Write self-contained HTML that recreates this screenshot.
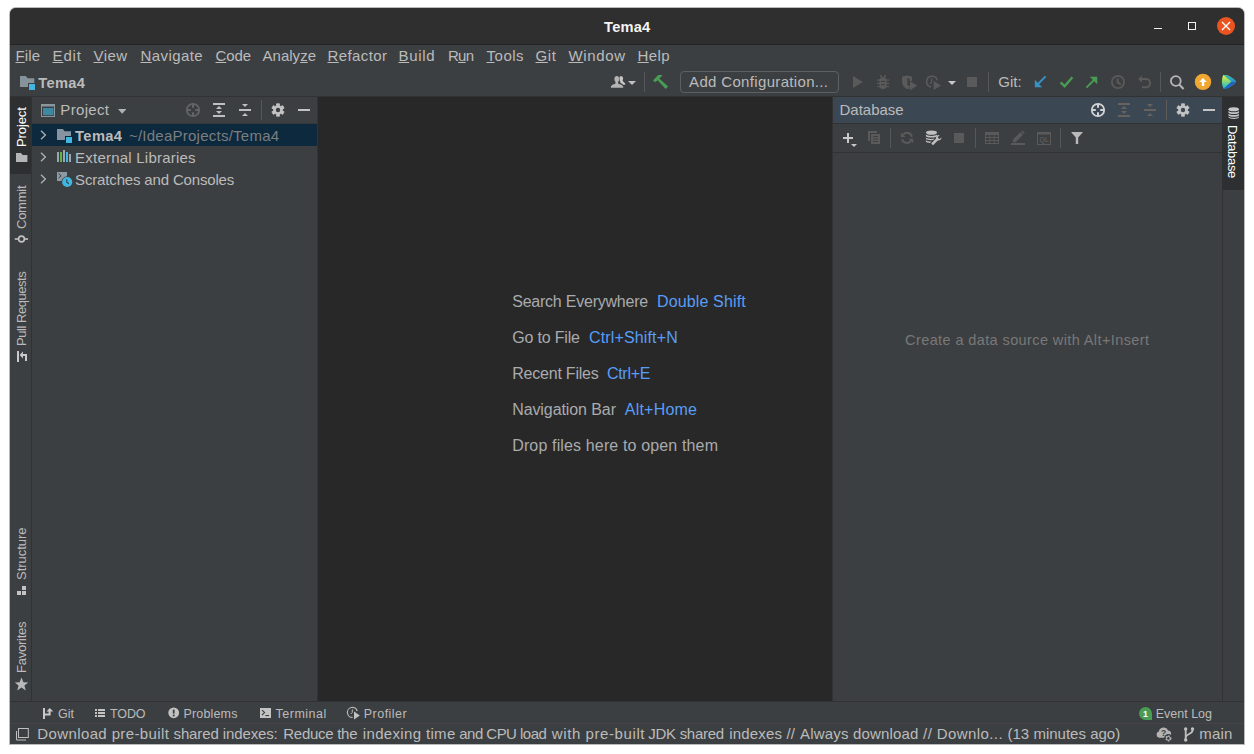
<!DOCTYPE html><html><head><meta charset="utf-8"><title>Tema4</title><style>

html,body{margin:0;padding:0;background:#ffffff;}
#app{position:relative;width:1254px;height:754px;overflow:hidden;background:#ffffff;font-family:"Liberation Sans", sans-serif;}
#app div,#app svg,#app span.t{position:absolute;display:block;}
#app span.t{white-space:nowrap;line-height:1;}
#app u{text-decoration:underline;text-underline-offset:0.5px;text-decoration-thickness:1px;}

</style></head><body><div id="app">
<div style="left:9px;top:7px;width:1236px;height:738px;background:#b9b9b9;border-radius:7px 7px 0 0;"></div>
<div style="left:10px;top:8px;width:1234px;height:736px;background:#3c3f41;border-radius:6px 6px 0 0;"></div>
<div style="left:10px;top:8px;width:1234px;height:36px;background:#302f30;border-radius:6px 6px 0 0;"></div>
<div style="left:10px;top:44px;width:1234px;height:1px;background:#232323;"></div>
<div style="left:10px;top:96px;width:1234px;height:1px;background:#323232;"></div>
<div style="left:10px;top:97px;width:21px;height:604px;background:#3c3f41;"></div>
<div style="left:10px;top:97px;width:21px;height:77px;background:#2d2f30;"></div>
<div style="left:31px;top:97px;width:1px;height:604px;background:#323232;"></div>
<div style="left:32px;top:97px;width:285px;height:604px;background:#3c3f41;"></div>
<div style="left:32px;top:124px;width:285px;height:22px;background:#0d293e;"></div>
<div style="left:317px;top:97px;width:1px;height:604px;background:#323232;"></div>
<div style="left:32px;top:123px;width:285px;height:1px;background:#343638;"></div>
<div style="left:318px;top:97px;width:514px;height:604px;background:#282828;"></div>
<div style="left:832px;top:97px;width:1px;height:604px;background:#323232;"></div>
<div style="left:833px;top:97px;width:389px;height:26px;background:#3c4754;"></div>
<div style="left:833px;top:123px;width:389px;height:1px;background:#323232;"></div>
<div style="left:833px;top:152px;width:389px;height:1px;background:#323232;"></div>
<div style="left:1222px;top:97px;width:1px;height:604px;background:#323232;"></div>
<div style="left:1222px;top:97px;width:22px;height:93px;background:#2d2f30;"></div>
<div style="left:10px;top:701px;width:1234px;height:1px;background:#323232;"></div>
<div style="left:10px;top:723px;width:1234px;height:1px;background:#484443;"></div>
<div style="left:1154px;top:28px;width:8px;height:1px;background:#ffffff;opacity:.92;"></div>
<div style="left:1188px;top:22px;width:8px;height:8px;background:transparent;box-sizing:border-box;border:1px solid #f2f2f2;"></div>
<div style="left:680px;top:71px;width:159px;height:22px;background:transparent;box-sizing:border-box;border:1px solid #5e6060;border-radius:4px;"></div>
<div style="left:644px;top:72px;width:1px;height:20px;background:#555759;"></div>
<div style="left:988px;top:72px;width:1px;height:20px;background:#555759;"></div>
<div style="left:1160px;top:72px;width:1px;height:20px;background:#555759;"></div>
<div style="left:261px;top:100px;width:1px;height:20px;background:#555759;"></div>
<div style="left:1166px;top:100px;width:1px;height:20px;background:#5f5c5a;"></div>
<div style="left:890px;top:128px;width:1px;height:20px;background:#555759;"></div>
<div style="left:975px;top:128px;width:1px;height:20px;background:#555759;"></div>
<div style="left:1060px;top:128px;width:1px;height:20px;background:#555759;"></div>
<div style="left:967px;top:77px;width:10px;height:10px;background:#5a5a5a;"></div>
<div style="left:298px;top:109px;width:12px;height:2px;background:#c3c3c3;"></div>
<div style="left:1203px;top:109px;width:12px;height:2px;background:#c3c3c3;"></div>
<div style="left:843px;top:137px;width:10px;height:2px;background:#c8c8c8;"></div>
<div style="left:847px;top:133px;width:2px;height:10px;background:#c8c8c8;"></div>
<div style="left:954px;top:133px;width:10px;height:10px;background:#5a5a5a;"></div>
<svg style="left:1217px;top:17px" width="18" height="18" viewBox="0 0 18 18"><circle cx="9" cy="9" r="9" fill="#e95420"/><path d="M5 5l8 8M13 5l-8 8" stroke="#fff" stroke-width="1.3" fill="none"/></svg>
<svg style="left:20px;top:76px" width="15" height="14" viewBox="0 0 15 14"><path d="M0 0h5.800l1.800 2.200H14.300V11H0z" fill="#87939a"/><rect x="8" y="7" width="7" height="7" fill="#3c3f41"/><rect x="9" y="8" width="6" height="6" fill="#40b6e0"/></svg>
<svg style="left:610px;top:75px" width="16" height="14" viewBox="0 0 16 14"><g fill="#c6c6c6"><ellipse cx="11.100" cy="3.600" rx="2" ry="2.700"/><path d="M10.200 5.600 11.900 5.300 15.200 8.500V9.700H13.300L10.200 7.400z"/></g><g fill="#b4b4b4" stroke="#3c3f41" stroke-width=".7" paint-order="stroke"><path d="M.9 12.800V11.600C1.200 10 3.400 9.300 5.500 8.400V6.800C4.700 6.200 4.400 5 4.400 3.900 4.400 2.200 5.400 .9 6.800 .9S9.200 2.200 9.200 3.900C9.200 5 8.900 6.200 8.100 6.800V8.400C10.200 9.300 12.900 10 13.200 11.600V12.800z"/></g></svg>
<svg style="left:628px;top:81px" width="8" height="4" viewBox="0 0 8 4"><path d="M0 0h8L4 4z" fill="#c0c0c0"/></svg>
<svg style="left:652px;top:74px" width="17" height="16" viewBox="0 0 17 16"><path d="M.9 6.500 6.200 .9 10 1.100V1.900L7.300 4.400 16.100 12.600 13.700 14.900 5.600 6.200 3.300 8.300z" fill="#499c54"/></svg>
<svg style="left:853px;top:76px" width="10" height="12" viewBox="0 0 10 12"><path d="M0 0 9.800 6 0 12z" fill="#5a5a5a"/></svg>
<svg style="left:876px;top:74px" width="14" height="16" viewBox="0 0 14 16"><path d="M4.200 1.200 6.300 3.700M9.700 1.200 7.800 3.700" fill="none" stroke="#5a5a5a" stroke-width="1.500"/><g fill="#5a5a5a"><rect x="1" y="5.400" width="12.200" height="1.300"/><rect x="1" y="8.800" width="12.200" height="1.200"/><rect x="1" y="12.100" width="12.200" height="1.100"/><path d="M3.500 6.400a3.550 2.900 0 0 1 7.100 0v5.400a3.550 3.200 0 0 1-7.100 0z"/></g><path d="M5 7.400h4M5 10.650h4" stroke="#3c3f41" stroke-width="1"/></svg>
<svg style="left:901px;top:75px" width="17" height="16" viewBox="0 0 17 16"><path d="M1 1.600C3.500 1.500 5 1 6 .600 7 1 8.500 1.500 11 1.600V6L8.600 6V3.400L6.400 3V10.600L8.600 10.400V13.400C7.800 13.800 6.800 14 6 14 2.500 12.500 1 9.500 1 6z" fill="#5a5a5a"/><path d="M9 6.200 16.200 10.600 9 15.200z" fill="#5a5a5a"/></svg>
<svg style="left:925px;top:74px" width="17" height="17" viewBox="0 0 17 17"><path d="M6.110 12.920A5.400 5.400 0 1 1 12.270 6.200" fill="none" stroke="#5a5a5a" stroke-width="1.600"/><path d="M6.800 4.400 6.500 8.400 4.900 9.700" fill="none" stroke="#5a5a5a" stroke-width="1.300"/><path d="M8.700 7.100 16 11.500 8.700 16z" fill="#5a5a5a"/></svg>
<svg style="left:948px;top:81px" width="8" height="4" viewBox="0 0 8 4"><path d="M0 0h8L4 4z" fill="#c8c8c8"/></svg>
<svg style="left:1034px;top:75px" width="13" height="13" viewBox="0 0 13 13"><path d="M11.600 1.400 3.600 9.400" stroke="#3592c4" stroke-width="2" fill="none"/><path d="M.8 4.800V12.200H8.200z" fill="#3592c4"/></svg>
<svg style="left:1059px;top:75px" width="15" height="13" viewBox="0 0 15 13"><path d="M1.600 7.400 5.600 11.200 13.400 2.200" stroke="#499c54" stroke-width="2.400" fill="none"/></svg>
<svg style="left:1085px;top:76px" width="13" height="13" viewBox="0 0 13 13"><path d="M1.400 11.600 9.400 3.600" stroke="#499c54" stroke-width="2" fill="none"/><path d="M4.800 .8H12.200V8.200z" fill="#499c54"/></svg>
<svg style="left:1110px;top:74px" width="16" height="16" viewBox="0 0 16 16"><circle cx="8" cy="8" r="6.100" fill="none" stroke="#5a5a5a" stroke-width="1.800"/><path d="M7.600 4.400V8.400L10.800 10.400" fill="none" stroke="#5a5a5a" stroke-width="2"/></svg>
<svg style="left:1137px;top:74px" width="15" height="15" viewBox="0 0 15 15"><path d="M1.200 5 5 1.200V8.800z" fill="#5a5a5a"/><path d="M4.600 5H9.400A3.700 4.100 0 0 1 9.400 13.200H5" fill="none" stroke="#5a5a5a" stroke-width="2"/></svg>
<svg style="left:1169px;top:74px" width="16" height="16" viewBox="0 0 16 16"><circle cx="6.800" cy="7" r="4.900" fill="none" stroke="#b6b6b6" stroke-width="1.800"/><path d="M10.400 10.800 14.600 15" stroke="#b6b6b6" stroke-width="2" fill="none"/></svg>
<svg style="left:1194px;top:73px" width="18" height="18" viewBox="0 0 18 18"><circle cx="9" cy="8.900" r="8.200" fill="#f0a732"/><path d="M9 5 12.800 9H10.200V13H7.800V9H5.200z" fill="#fff"/></svg>
<svg style="left:1221px;top:74px" width="16" height="16" viewBox="0 0 16 16"><defs><linearGradient id="sg1" x1="0" y1="0" x2="0" y2="1"><stop offset="0" stop-color="#f6f03c"/><stop offset=".5" stop-color="#7fd67a"/><stop offset="1" stop-color="#14b5e8"/></linearGradient><linearGradient id="sg2" x1="0" y1="0" x2="1" y2="1"><stop offset="0" stop-color="#35c7a0"/><stop offset="1" stop-color="#1a8fe0"/></linearGradient></defs><path d="M2.200 1C6.500 .6 12 3.600 15 7.600 12.600 11.600 7 14.800 2.600 14.800 .4 10.500 .4 5 2.200 1z" fill="url(#sg1)"/><path d="M2.200 1C6.500 .6 12 3.600 15 7.600L10.400 7.500z" fill="url(#sg2)"/><path d="M15 7.600C12.600 11.600 7 14.800 2.600 14.800L10.400 7.500z" fill="#1f62c8"/></svg>
<svg style="left:41px;top:104px" width="14" height="13" viewBox="0 0 14 13"><rect x=".5" y=".5" width="13" height="12" fill="none" stroke="#8b979f"/><rect x="0" y="0" width="14" height="2.500" fill="#8b979f"/><rect x="2" y="4" width="10.500" height="7.200" fill="#3d88a3"/></svg>
<svg style="left:118px;top:109px" width="8" height="5" viewBox="0 0 8 5"><path d="M0 0h8.400L4.200 4.800z" fill="#afb1b3"/></svg>
<svg style="left:185px;top:102px" width="16" height="16" viewBox="0 0 16 16"><g fill="none" stroke="#626466"><circle cx="8" cy="8" r="6.200" stroke-width="1.800"/><path d="M8 1.600V5.800M8 10.200V14.400M1.600 8H5.800M10.200 8H14.400" stroke-width="2"/></g></svg>
<svg style="left:213px;top:103px" width="12" height="14" viewBox="0 0 12 14"><g fill="#bfbfbf"><rect x="0" y="0" width="12" height="2"/><rect x="0" y="12" width="12" height="2"/><path d="M3 6H9L6 3z"/><path d="M3 8H9L6 11z"/></g></svg>
<svg style="left:239px;top:103px" width="12" height="14" viewBox="0 0 12 14"><g fill="#bfbfbf"><rect x="0" y="6" width="12" height="2"/><path d="M3 1H9L6 4z"/><path d="M3 13H9L6 10z"/></g></svg>
<svg style="left:271px;top:103px" width="14" height="14" viewBox="0 0 14 14"><path d="M5.54 2.74 L5.54 0.77 L8.46 0.77 L8.46 2.74 L9.96 3.61 L11.67 2.62 L13.13 5.15 L11.42 6.13 L11.42 7.87 L13.13 8.85 L11.67 11.38 L9.96 10.39 L8.46 11.26 L8.46 13.23 L5.54 13.23 L5.54 11.26 L4.04 10.39 L2.33 11.38 L0.87 8.85 L2.58 7.87 L2.58 6.13 L0.87 5.15 L2.33 2.62 L4.04 3.61z" fill="#c3c3c3" stroke="#c3c3c3" stroke-width=".8" stroke-linejoin="round"/><circle cx="7" cy="7" r="2.200" fill="#3c3f41"/></svg>
<svg style="left:40px;top:129.5px" width="7" height="10" viewBox="0 0 7 10"><path d="M1 .8 5.400 5 1 9.200" fill="none" stroke="#afb1b3" stroke-width="1.300"/></svg>
<svg style="left:40px;top:151.5px" width="7" height="10" viewBox="0 0 7 10"><path d="M1 .8 5.400 5 1 9.200" fill="none" stroke="#afb1b3" stroke-width="1.300"/></svg>
<svg style="left:40px;top:173.5px" width="7" height="10" viewBox="0 0 7 10"><path d="M1 .8 5.400 5 1 9.200" fill="none" stroke="#afb1b3" stroke-width="1.300"/></svg>
<svg style="left:57px;top:129px" width="16" height="15" viewBox="0 0 16 15"><path d="M0 0h5.800l1.800 2.200H14V11H0z" fill="#8594a0"/><rect x="8" y="7" width="8" height="8" fill="#0d293e"/><rect x="9" y="8" width="6" height="6" fill="#40b6e0"/></svg>
<svg style="left:57px;top:150px" width="15" height="12" viewBox="0 0 15 12"><rect x="0" y="2" width="2" height="10" fill="#9aa7b0"/><rect x="3" y="2" width="2" height="10" fill="#62b543"/><rect x="6" y="0" width="2" height="12" fill="#9aa7b0"/><rect x="9" y="2" width="2" height="10" fill="#40b6e0"/><rect x="12" y="4" width="2" height="8" fill="#9aa7b0"/></svg>
<svg style="left:57px;top:172px" width="16" height="16" viewBox="0 0 16 16"><rect x="0" y="0" width="10" height="9" fill="#8e9aa3"/><path d="M1.600 1.600 4.200 3.800 1.600 6" fill="none" stroke="#3c3f41" stroke-width="1"/><circle cx="10.200" cy="10" r="5.800" fill="#3c3f41"/><circle cx="10.200" cy="10" r="5.100" fill="#40b6e0"/><path d="M9.800 7.200V10.200L11.800 11.800" fill="none" stroke="#2d4a5a" stroke-width="1.200"/></svg>
<svg style="left:16px;top:153px" width="12" height="9" viewBox="0 0 12 9"><path d="M0 0h5l1.600 2H11.400V9H0z" fill="#b5b5b5"/></svg>
<svg style="left:14px;top:234px" width="15" height="10" viewBox="0 0 15 10"><path d="M.8 5H14" stroke="#c3c3c3" stroke-width="1.600"/><circle cx="7.500" cy="5" r="2.900" fill="#3c3f41" stroke="#c3c3c3" stroke-width="1.600"/></svg>
<svg style="left:16px;top:350px" width="12" height="13" viewBox="0 0 12 13"><g fill="#c8c8c8"><rect x="1" y="1" width="2" height="11"/><path d="M3.600 5 7 1.600V4H11V11H9V6H7V8.400z"/></g></svg>
<svg style="left:16px;top:585px" width="11" height="11" viewBox="0 0 11 11"><g fill="#c3c3c3"><rect x="6" y="1" width="4" height="4"/><rect x="1" y="6" width="4" height="4"/><rect x="6" y="6" width="4" height="4"/></g></svg>
<svg style="left:14px;top:677px" width="15" height="14" viewBox="0 0 15 14"><path d="M7.500 .4 9.400 5.200 14.200 5.400 10.400 8.600 11.800 13.400 7.500 10.600 3.200 13.400 4.600 8.600 .8 5.400 5.600 5.200z" fill="#b9b9b9"/></svg>
<svg style="left:1090px;top:102px" width="16" height="16" viewBox="0 0 16 16"><g fill="none" stroke="#d0d2d4"><circle cx="8" cy="8" r="6.200" stroke-width="1.800"/><path d="M8 1.600V5.800M8 10.200V14.400M1.600 8H5.800M10.200 8H14.400" stroke-width="2"/></g></svg>
<svg style="left:1118px;top:103px" width="12" height="14" viewBox="0 0 12 14"><g fill="#66625f"><rect x="0" y="0" width="12" height="2"/><rect x="0" y="12" width="12" height="2"/><path d="M3 6H9L6 3z"/><path d="M3 8H9L6 11z"/></g></svg>
<svg style="left:1144px;top:103px" width="12" height="14" viewBox="0 0 12 14"><g fill="#66625f"><rect x="0" y="6" width="12" height="2"/><path d="M3 1H9L6 4z"/><path d="M3 13H9L6 10z"/></g></svg>
<svg style="left:1176px;top:103px" width="14" height="14" viewBox="0 0 14 14"><path d="M5.54 2.74 L5.54 0.77 L8.46 0.77 L8.46 2.74 L9.96 3.61 L11.67 2.62 L13.13 5.15 L11.42 6.13 L11.42 7.87 L13.13 8.85 L11.67 11.38 L9.96 10.39 L8.46 11.26 L8.46 13.23 L5.54 13.23 L5.54 11.26 L4.04 10.39 L2.33 11.38 L0.87 8.85 L2.58 7.87 L2.58 6.13 L0.87 5.15 L2.33 2.62 L4.04 3.61z" fill="#c3c3c3" stroke="#c3c3c3" stroke-width=".8" stroke-linejoin="round"/><circle cx="7" cy="7" r="2.200" fill="#3c4754"/></svg>
<svg style="left:1228px;top:107px" width="11.4" height="12.2" viewBox="0 0 12 13"><g fill="#c8c8c8"><ellipse cx="6" cy="2.400" rx="5.600" ry="2.200"/><path d="M.4 4.200c1 1.800 10.200 1.800 11.200 0V6c-1 1.900-10.200 1.900-11.200 0z"/><path d="M.4 7.200c1 1.800 10.200 1.800 11.200 0V9c-1 1.900-10.200 1.900-11.200 0z"/><path d="M.4 10.200c1 1.800 10.200 1.800 11.200 0V11c-1 2.400-10.200 2.400-11.200 0z"/></g></svg>
<svg style="left:851px;top:144px" width="6" height="3" viewBox="0 0 6 3"><path d="M0 0h6L3 3z" fill="#c8c8c8"/></svg>
<svg style="left:868px;top:131px" width="12" height="13" viewBox="0 0 12 13"><path d="M0 0h9v2H2v8H0z" fill="#5a5a5a"/><rect x="3" y="3" width="9" height="10" fill="#5a5a5a"/><path d="M5 5.500h5M5 8h5M5 10.500h5" stroke="#3c3f41" stroke-width="1"/></svg>
<svg style="left:900px;top:131px" width="14" height="14" viewBox="0 0 14 14"><g fill="none" stroke="#5a5a5a" stroke-width="2"><path d="M3.100 3.700A5 5 0 0 1 11.900 5.800"/><path d="M10.950 9.950A5 5 0 0 1 2.100 8.200"/></g><path d="M.8 1.500V6H5.500z" fill="#5a5a5a"/><path d="M13.200 12.200V7.700H8.700z" fill="#5a5a5a"/></svg>
<svg style="left:925px;top:130px" width="17" height="16" viewBox="0 0 17 16"><g fill="#c0c0c0"><ellipse cx="6.500" cy="2.600" rx="5.600" ry="2.200"/><path d="M.9 4.600c1 1.700 10.200 1.700 11.200 0V6.200c-1 1.700-10.200 1.700-11.200 0z"/><path d="M.9 7.600c1 1.600 6.500 1.700 8.600.9L8 10c-2.400.4-6.300 0-7.100-1z"/><path d="M.9 10.200c.8 1.200 3.800 1.500 5.600 1.300L5 13c-1.800 0-3.600-.4-4.100-1.400z"/><path d="M6.200 13.400 11 8.600A3 3 0 0 1 14.600 5.200L12.800 7 13.400 8.400 14.800 9 16.400 7.200A3 3 0 0 1 12.800 10.400L8 15.200z"/></g></svg>
<svg style="left:985px;top:132px" width="14" height="12" viewBox="0 0 14 12"><rect width="14" height="12" fill="#5a5a5a"/><g fill="#3c3f41"><rect x="1" y="3" width="3.300" height="2"/><rect x="5.300" y="3" width="3.400" height="2"/><rect x="9.700" y="3" width="3.300" height="2"/><rect x="1" y="6" width="3.300" height="2"/><rect x="5.300" y="6" width="3.400" height="2"/><rect x="9.700" y="6" width="3.300" height="2"/><rect x="1" y="9" width="3.300" height="2"/><rect x="5.300" y="9" width="3.400" height="2"/><rect x="9.700" y="9" width="3.300" height="2"/></g></svg>
<svg style="left:1011px;top:130px" width="14" height="15" viewBox="0 0 14 15"><rect x="0" y="13" width="14" height="2" fill="#5a5a5a"/><path d="M2 9.600 9.400 2.200 12 4.800 4.600 12.200H2z" fill="#5a5a5a"/><path d="M10.200 1.400 11.200 .4 13.800 3 12.800 4z" fill="#5a5a5a"/></svg>
<svg style="left:1037px;top:132px" width="14" height="13" viewBox="0 0 14 13"><rect x=".5" y=".5" width="13" height="12" fill="none" stroke="#5a5a5a"/><rect width="14" height="2.500" fill="#5a5a5a"/><text x="7.200" y="10" font-family="Liberation Sans, sans-serif" font-size="6.800" font-weight="bold" fill="#5a5a5a" text-anchor="middle">QL</text></svg>
<svg style="left:1071px;top:132px" width="12" height="12" viewBox="0 0 12 12"><path d="M0 0H12L7.200 5.600V12H4.800V5.600z" fill="#b9b9b9"/></svg>
<svg style="left:43px;top:708px" width="11" height="11" viewBox="0 0 11 11"><g fill="#c8c8c8"><rect x="0" y="0" width="2" height="11"/><path d="M2 5.600H5.600V3.600H3.400L6.800 0 10.200 3.600H7.600V7.600H2z"/></g></svg>
<svg style="left:95px;top:709px" width="10" height="8" viewBox="0 0 10 8"><g fill="#c3c3c3"><rect x="0" y="0" width="2" height="2"/><rect x="3" y="0" width="7" height="2"/><rect x="0" y="3" width="2" height="2"/><rect x="3" y="3" width="7" height="2"/><rect x="0" y="6" width="2" height="2"/><rect x="3" y="6" width="7" height="2"/></g></svg>
<svg style="left:168px;top:707px" width="12" height="12" viewBox="0 0 12 12"><circle cx="5.700" cy="5.800" r="5.400" fill="#c3c3c3"/><rect x="4.800" y="2.600" width="1.800" height="4" fill="#3c3f41"/><rect x="4.800" y="7.600" width="1.800" height="1.800" fill="#3c3f41"/></svg>
<svg style="left:260px;top:708px" width="11" height="10" viewBox="0 0 11 10"><rect width="11" height="10" fill="#c3c3c3"/><path d="M2 2.200 4.600 4.600 2 7" fill="none" stroke="#3c3f41" stroke-width="1.100"/><rect x="5.400" y="7" width="3.600" height="1.100" fill="#3c3f41"/></svg>
<svg style="left:346px;top:706px" width="15" height="15" viewBox="0 0 15 15"><path d="M6.600 11.400A5 5 0 1 1 11.200 5" fill="none" stroke="#b9b9b9" stroke-width="1.200"/><path d="M6.400 3.400 6.200 6.600 4.800 8" fill="none" stroke="#b9b9b9" stroke-width="1"/><path d="M8 5.400 13.800 9.400 8 13.600z" fill="#c3c3c3"/></svg>
<svg style="left:1139px;top:707px" width="13" height="13" viewBox="0 0 13 13"><path d="M6.500 0A6.500 6.500 0 0 1 13 6.500V13H6.500A6.500 6.500 0 0 1 6.500 0z" fill="#499c54"/></svg>
<svg style="left:16px;top:728px" width="13" height="13" viewBox="0 0 13 13"><rect x="2.500" y=".5" width="9.800" height="9" fill="none" stroke="#c0c0c0" stroke-width="1"/><path d="M.5 3v9h9.500" fill="none" stroke="#c0c0c0" stroke-width="1"/></svg>
<svg style="left:1156px;top:727px" width="17" height="15" viewBox="0 0 17 15"><path d="M3.300 10.800A3.300 3.300 0 0 1 2.800 4.400 5 5 0 0 1 12.200 3.400 3.800 3.800 0 0 1 15 8L9 10.800z" fill="#b4b4b4"/><text x="7.600" y="8.800" font-family="Liberation Sans, sans-serif" font-size="8.500" font-weight="bold" fill="#3c3f41" text-anchor="middle">?</text><circle cx="12.400" cy="11.400" r="4.300" fill="#3c3f41"/><circle cx="12.400" cy="11.400" r="2.300" fill="none" stroke="#b4b4b4" stroke-width="1.500" stroke-dasharray="1.300 1.110"/><circle cx="12.400" cy="11.400" r="1.900" fill="none" stroke="#b4b4b4" stroke-width="1"/></svg>
<svg style="left:1183px;top:727px" width="12" height="15" viewBox="0 0 12 15"><g fill="none" stroke="#c0c0c0" stroke-width="1.800"><path d="M2.700 1.600V13.400"/><path d="M9.500 1.800V3.600C9.500 7.600 2.700 6.400 2.700 10.600"/></g><g fill="#c0c0c0"><circle cx="2.700" cy="1.900" r="1.700"/><circle cx="2.700" cy="13" r="1.700"/><circle cx="9.500" cy="1.900" r="1.700"/></g></svg>
<span class="t" id="t0" style="font-size:14.67px;color:#f4f4f4;font-weight:bold;letter-spacing:0.185px;left:604.10px;top:19.70px;">Tema4</span>
<span class="t" id="t1" style="font-size:15px;color:#bbbbbb;letter-spacing:0.104px;left:15.50px;top:47.80px;"><u>F</u>ile</span>
<span class="t" id="t2" style="font-size:15px;color:#bbbbbb;letter-spacing:0.880px;left:52.50px;top:47.80px;"><u>E</u>dit</span>
<span class="t" id="t3" style="font-size:15px;color:#bbbbbb;letter-spacing:0.417px;left:93.50px;top:47.80px;"><u>V</u>iew</span>
<span class="t" id="t4" style="font-size:15px;color:#bbbbbb;letter-spacing:0.412px;left:140.50px;top:47.80px;"><u>N</u>avigate</span>
<span class="t" id="t5" style="font-size:15px;color:#bbbbbb;letter-spacing:-0.125px;left:215.50px;top:47.80px;"><u>C</u>ode</span>
<span class="t" id="t6" style="font-size:15px;color:#bbbbbb;letter-spacing:0.021px;left:262.50px;top:47.80px;">Analy<u>z</u>e</span>
<span class="t" id="t7" style="font-size:15px;color:#bbbbbb;letter-spacing:0.400px;left:327.50px;top:47.80px;"><u>R</u>efactor</span>
<span class="t" id="t8" style="font-size:15px;color:#bbbbbb;letter-spacing:0.656px;left:398.50px;top:47.80px;"><u>B</u>uild</span>
<span class="t" id="t9" style="font-size:15px;color:#bbbbbb;letter-spacing:-0.766px;left:448.00px;top:47.80px;">R<u>u</u>n</span>
<span class="t" id="t10" style="font-size:15px;color:#bbbbbb;letter-spacing:0.517px;left:486.50px;top:47.80px;"><u>T</u>ools</span>
<span class="t" id="t11" style="font-size:15px;color:#bbbbbb;letter-spacing:0.664px;left:535.50px;top:47.80px;"><u>G</u>it</span>
<span class="t" id="t12" style="font-size:15px;color:#bbbbbb;letter-spacing:0.625px;left:568.50px;top:47.80px;"><u>W</u>indow</span>
<span class="t" id="t13" style="font-size:15px;color:#bbbbbb;letter-spacing:0.408px;left:637.50px;top:47.80px;"><u>H</u>elp</span>
<span class="t" id="t14" style="font-size:14.67px;color:#bbbbbb;font-weight:bold;letter-spacing:0.335px;left:38.30px;top:75.90px;">Tema4</span>
<span class="t" id="t15" style="font-size:15px;color:#bbbbbb;letter-spacing:0.332px;left:689.10px;top:73.70px;">Add Configuration...</span>
<span class="t" id="t16" style="font-size:15px;color:#bbbbbb;letter-spacing:0.019px;left:998.30px;top:74.00px;">Git:</span>
<span class="t" id="t17" style="font-size:15px;color:#bbbbbb;letter-spacing:0.335px;left:60.30px;top:102.00px;">Project</span>
<span class="t" id="t18" style="font-size:14.67px;color:#bbbbbb;font-weight:bold;letter-spacing:0.385px;left:75.10px;top:128.70px;">Tema4</span>
<span class="t" id="t19" style="font-size:15px;color:#7c7e80;letter-spacing:0.247px;left:128.90px;top:127.70px;">~/IdeaProjects/Tema4</span>
<span class="t" id="t20" style="font-size:15px;color:#bbbbbb;letter-spacing:0.222px;left:75.10px;top:149.60px;">External Libraries</span>
<span class="t" id="t21" style="font-size:15px;color:#bbbbbb;letter-spacing:-0.162px;left:75.10px;top:171.80px;">Scratches and Consoles</span>
<span class="t" id="t22" style="font-size:13px;color:#ffffff;letter-spacing:-0.111px;left:15.40px;top:146.70px;transform-origin:0 0;transform:rotate(-90deg);">Project</span>
<span class="t" id="t23" style="font-size:13px;color:#bbbbbb;letter-spacing:-0.256px;left:15.40px;top:228.80px;transform-origin:0 0;transform:rotate(-90deg);">Commit</span>
<span class="t" id="t24" style="font-size:13px;color:#bbbbbb;letter-spacing:-0.460px;left:15.40px;top:346.00px;transform-origin:0 0;transform:rotate(-90deg);">Pull Requests</span>
<span class="t" id="t25" style="font-size:13px;color:#bbbbbb;letter-spacing:-0.031px;left:15.40px;top:580.30px;transform-origin:0 0;transform:rotate(-90deg);">Structure</span>
<span class="t" id="t26" style="font-size:13px;color:#bbbbbb;letter-spacing:-0.234px;left:15.40px;top:673.40px;transform-origin:0 0;transform:rotate(-90deg);">Favorites</span>
<span class="t" id="t27" style="font-size:16px;color:#a9abad;letter-spacing:-0.227px;left:512.20px;top:293.60px;">Search Everywhere</span>
<span class="t" id="t28" style="font-size:16px;color:#589df6;letter-spacing:0.139px;left:657.00px;top:293.60px;">Double Shift</span>
<span class="t" id="t29" style="font-size:16px;color:#a9abad;letter-spacing:-0.173px;left:512.20px;top:329.60px;">Go to File</span>
<span class="t" id="t30" style="font-size:16px;color:#589df6;letter-spacing:0.142px;left:589.00px;top:329.60px;">Ctrl+Shift+N</span>
<span class="t" id="t31" style="font-size:16px;color:#a9abad;letter-spacing:-0.211px;left:512.20px;top:365.60px;">Recent Files</span>
<span class="t" id="t32" style="font-size:16px;color:#589df6;letter-spacing:-0.261px;left:606.90px;top:365.60px;">Ctrl+E</span>
<span class="t" id="t33" style="font-size:16px;color:#a9abad;letter-spacing:-0.089px;left:512.20px;top:401.60px;">Navigation Bar</span>
<span class="t" id="t34" style="font-size:16px;color:#589df6;letter-spacing:0.214px;left:624.80px;top:401.60px;">Alt+Home</span>
<span class="t" id="t35" style="font-size:16px;color:#a9abad;letter-spacing:0.145px;left:512.20px;top:437.60px;">Drop files here to open them</span>
<span class="t" id="t36" style="font-size:15px;color:#bbbbbb;letter-spacing:-0.003px;left:839.50px;top:101.90px;">Database</span>
<span class="t" id="t37" style="font-size:14.5px;color:#787878;letter-spacing:0.394px;left:905.10px;top:332.80px;">Create a data source with Alt+Insert</span>
<span class="t" id="t38" style="font-size:13px;color:#ffffff;letter-spacing:-0.337px;left:1239.30px;top:124.90px;transform-origin:0 0;transform:rotate(90deg);">Database</span>
<span class="t" id="t39" style="font-size:12.5px;color:#bbbbbb;letter-spacing:-0.042px;left:58.00px;top:707.80px;">Git</span>
<span class="t" id="t40" style="font-size:12.5px;color:#bbbbbb;letter-spacing:-0.064px;left:109.90px;top:707.80px;">TODO</span>
<span class="t" id="t41" style="font-size:12.5px;color:#bbbbbb;letter-spacing:0.158px;left:183.50px;top:707.80px;">Problems</span>
<span class="t" id="t42" style="font-size:12.5px;color:#bbbbbb;letter-spacing:0.507px;left:275.50px;top:707.80px;">Terminal</span>
<span class="t" id="t43" style="font-size:12.5px;color:#bbbbbb;letter-spacing:0.472px;left:363.80px;top:707.80px;">Profiler</span>
<span class="t" id="t44" style="font-size:12.5px;color:#bbbbbb;letter-spacing:-0.012px;left:1155.80px;top:707.80px;">Event Log</span>
<span class="t" id="t45" style="font-size:15px;color:#bbbbbb;letter-spacing:0.384px;left:37.30px;top:726.00px;">Download pre-built</span>
<span class="t" id="t46" style="font-size:15px;color:#bbbbbb;letter-spacing:-0.115px;left:173.50px;top:726.00px;">shared indexes:</span>
<span class="t" id="t47" style="font-size:15px;color:#bbbbbb;letter-spacing:-0.282px;left:283.30px;top:726.00px;">Reduce the</span>
<span class="t" id="t48" style="font-size:15px;color:#bbbbbb;letter-spacing:0.342px;left:362.80px;top:726.00px;">indexing time</span>
<span class="t" id="t49" style="font-size:15px;color:#bbbbbb;letter-spacing:-0.537px;left:459.30px;top:726.00px;">and CPU load</span>
<span class="t" id="t50" style="font-size:15px;color:#bbbbbb;letter-spacing:0.589px;left:551.80px;top:726.00px;">with pre-built</span>
<span class="t" id="t51" style="font-size:15px;color:#bbbbbb;letter-spacing:-0.264px;left:648.20px;top:726.00px;">JDK shared</span>
<span class="t" id="t52" style="font-size:15px;color:#bbbbbb;letter-spacing:0.165px;left:729.30px;top:726.00px;">indexes //</span>
<span class="t" id="t53" style="font-size:15px;color:#bbbbbb;letter-spacing:0.178px;left:800.00px;top:726.00px;">Always download</span>
<span class="t" id="t54" style="font-size:15px;color:#bbbbbb;letter-spacing:0.406px;left:923.10px;top:726.00px;">// Downlo...</span>
<span class="t" id="t55" style="font-size:15px;color:#bbbbbb;letter-spacing:0.009px;left:1007.50px;top:726.00px;">(13 minutes ago)</span>
<span class="t" id="t56" style="font-size:15px;color:#bbbbbb;letter-spacing:0.195px;left:1199.30px;top:725.50px;">main</span>
<span class="t" id="t57" style="font-size:8.8px;color:#ffffff;font-weight:bold;left:1142.90px;top:710.20px;">1</span>
</div></body></html>
